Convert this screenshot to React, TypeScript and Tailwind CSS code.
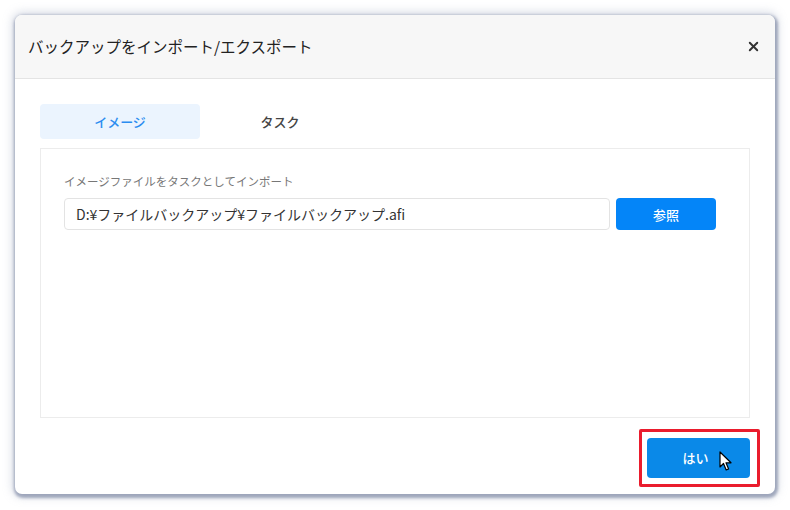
import React from "react";
import { X } from "lucide-react";

const jp = { fontFamily: '"Noto Sans CJK JP", "Noto Sans", sans-serif' };

export default function App() {
  return (
    <div className="h-[510px] w-[790px] bg-white p-[15px]" style={jp}>
      <div className="flex h-[479px] w-[760px] flex-col overflow-hidden rounded-[7px] bg-white shadow-[1px_2px_3px_2px_rgba(120,130,160,0.65),0_0_10px_3px_rgba(150,160,185,0.35)]">
        {/* Header */}
        <div className="flex h-[64px] shrink-0 items-center justify-between border-b border-[#e4e4e4] bg-[#f7f7f7] pl-[13px] pr-[14px]">
          <h1 className="text-[15.5px] font-normal text-[#222]">
            バックアップをインポート/エクスポート
          </h1>
          <X className="h-[15px] w-[15px] text-[#333]" strokeWidth={3} />
        </div>

        {/* Body */}
        <div className="flex flex-1 flex-col px-[25px] pt-[25px]">
          {/* Tabs */}
          <div className="flex h-[35px]">
            <div className="flex w-[160px] items-center justify-center rounded-[4px] bg-[#ebf4fe] text-[13px] font-medium text-[#2a8cf0]">
              イメージ
            </div>
            <div className="flex w-[160px] items-center justify-center text-[13px] font-medium text-[#444]">
              タスク
            </div>
          </div>

          {/* Panel */}
          <div className="mt-[9px] h-[270px] border border-[#ececec] px-[23px] pt-[24px]">
            <p className="text-[11.5px] text-[#777]">
              イメージファイルをタスクとしてインポート
            </p>
            <div className="mt-[8px] flex gap-[6px]">
              <div className="flex h-[32px] w-[546px] items-center rounded-[4px] border border-[#e3e3e3] px-[11px] text-[14px] text-[#333]">
                D:¥ファイルバックアップ¥ファイルバックアップ.afi
              </div>
              <button
                type="button"
                className="h-[32px] w-[100px] rounded-[4px] bg-[#0485f8] text-[13px] font-medium text-white"
              >
                参照
              </button>
            </div>
          </div>

          {/* Footer */}
          <div className="mt-[20px] flex justify-end">
            <div className="relative">
              <button
                type="button"
                className="h-[40px] w-[103px] rounded-[4px] bg-[#0a89e8] text-[13px] font-medium text-white"
              >
                <span className="ml-[-6px]">はい</span>
              </button>
              <div className="pointer-events-none absolute bottom-[-9px] left-[-8px] right-[-10px] top-[-9px] rounded-[2px] border-[3px] border-[#ea1c2d]" />
              <svg
                className="absolute left-[72px] top-[13px]"
                width="15"
                height="21"
                viewBox="0 0 15 21"
              >
                <path
                  d="M1 1 L1 16 L4.5 12.5 L7.2 19 L9.6 18 L7 11.8 L12 11.8 Z"
                  fill="white"
                  stroke="black"
                  strokeWidth="1.2"
                  strokeLinejoin="round"
                />
              </svg>
            </div>
          </div>
        </div>
      </div>
    </div>
  );
}
